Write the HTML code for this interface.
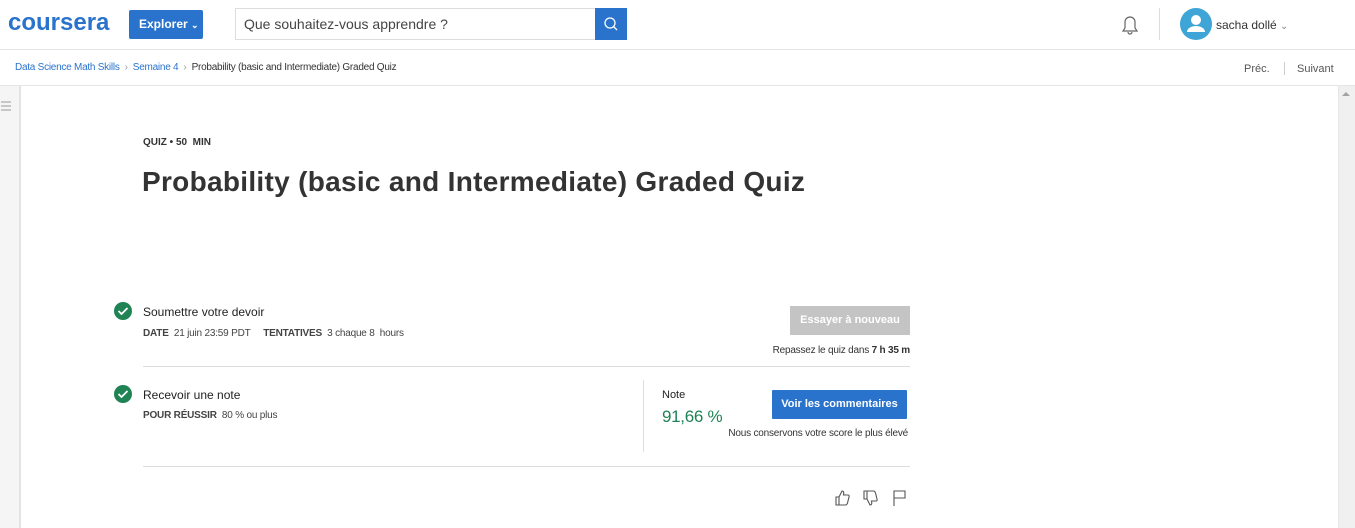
<!DOCTYPE html>
<html><head><meta charset="utf-8"><style>
*{margin:0;padding:0;box-sizing:border-box}
body{width:1355px;height:528px;overflow:hidden;background:#fff;font-family:"Liberation Sans",sans-serif;color:#1f1f1f;position:relative}
.a{position:absolute;white-space:nowrap}
</style></head><body>
<div class="a" style="left:8px;top:9px;font-size:24px;font-weight:bold;color:#2a73cc;letter-spacing:0px">coursera</div>
<div class="a" style="left:129px;top:10px;width:74px;height:29px;background:#2a73cc;border-radius:2px;color:#fff;font-size:12px;font-weight:bold;line-height:29px;padding-left:10px">Explorer <span style="font-size:9px">&#8964;</span></div>
<div class="a" style="left:235px;top:8px;width:361px;height:32px;border:1px solid #ddd;font-size:14px;color:#444;line-height:30px;padding-left:8px">Que souhaitez-vous apprendre ?</div>
<div class="a" style="left:595px;top:8px;width:32px;height:32px;background:#2a73cc">
<svg width="32" height="32"><circle cx="15" cy="15" r="5" fill="none" stroke="#fff" stroke-width="1.3"/><line x1="18.5" y1="18.5" x2="22" y2="22" stroke="#fff" stroke-width="1.3"/></svg></div>
<svg class="a" style="left:1118px;top:12px" width="24" height="26"><path d="M5 19h14l-2-3v-6a5 5 0 0 0-10 0v6z" fill="none" stroke="#666" stroke-width="1.2"/><path d="M10 20a2 2 0 0 0 4 0" fill="none" stroke="#666" stroke-width="1.2"/></svg>
<div class="a" style="left:1159px;top:8px;width:1px;height:32px;background:#ddd"></div>
<svg class="a" style="left:1180px;top:8px" width="32" height="32"><circle cx="16" cy="16" r="16" fill="#3fa5d6"/><circle cx="16" cy="12" r="5" fill="#fff"/><path d="M7 24a9 6 0 0 1 18 0z" fill="#fff"/></svg>
<div class="a" style="left:1216px;top:18px;font-size:12px;color:#333">sacha dollé <span style="color:#888;font-size:10px">&#8964;</span></div>
<div class="a" style="left:0;top:49px;width:1355px;height:1px;background:#e5e5e5"></div>
<div class="a" style="left:15px;top:62px;font-size:10px;color:#2a73cc;letter-spacing:-0.25px">Data Science Math Skills <span style="color:#999">&nbsp;›&nbsp;</span> Semaine 4 <span style="color:#999">&nbsp;›&nbsp;</span> <span style="color:#333">Probability (basic and Intermediate) Graded Quiz</span></div>
<div class="a" style="left:1244px;top:63px;font-size:11px;color:#555">Préc.</div>
<div class="a" style="left:1284px;top:62px;width:1px;height:13px;background:#ccc"></div>
<div class="a" style="left:1297px;top:63px;font-size:11px;color:#555">Suivant</div>
<div class="a" style="left:0;top:85px;width:1355px;height:1px;background:#e5e5e5"></div>
<div class="a" style="left:0;top:86px;width:21px;height:442px;background:#f5f5f5;border-right:2px solid #e3e3e3"></div>
<svg class="a" style="left:0;top:99px" width="12" height="14"><path d="M1 3h10M1 7h10M1 11h10" stroke="#999" stroke-width="1"/></svg>
<div class="a" style="left:1338px;top:86px;width:17px;height:442px;background:#f0f0f0;border-left:1px solid #e6e6e6"></div>
<svg class="a" style="left:1341px;top:90px" width="10" height="8"><path d="M1 6L5 2L9 6z" fill="#a3a3a3"/></svg>
<div class="a" style="left:143px;top:137px;font-size:10px;font-weight:bold;color:#333">QUIZ • 50 &nbsp;MIN</div>
<div class="a" style="left:142px;top:166px;font-size:28px;font-weight:bold;color:#333;letter-spacing:0.3px">Probability (basic and Intermediate) Graded Quiz</div>
<svg class="a" style="left:113px;top:301px" width="20" height="20"><circle cx="10" cy="10" r="9" fill="#1f8354"/><path d="M5.5 10l3 3 6-6" fill="none" stroke="#fff" stroke-width="1.8"/></svg>
<div class="a" style="left:143px;top:305px;font-size:12px;color:#222">Soumettre votre devoir</div>
<div class="a" style="left:143px;top:328px;font-size:10px;color:#444;letter-spacing:-0.2px"><b>DATE</b>&nbsp; 21 juin 23:59 PDT &nbsp; &nbsp; <b>TENTATIVES</b>&nbsp; 3 chaque 8 &nbsp;hours</div>
<div class="a" style="left:790px;top:306px;width:120px;height:29px;background:#c4c4c4;color:#fff;font-size:11px;font-weight:bold;text-align:center;line-height:29px">Essayer à nouveau</div>
<div class="a" style="right:445px;top:345px;font-size:10px;color:#333;letter-spacing:-0.2px">Repassez le quiz dans <b>7 h 35 m</b></div>
<div class="a" style="left:143px;top:366px;width:767px;height:1px;background:#ddd"></div>
<svg class="a" style="left:113px;top:384px" width="20" height="20"><circle cx="10" cy="10" r="9" fill="#1f8354"/><path d="M5.5 10l3 3 6-6" fill="none" stroke="#fff" stroke-width="1.8"/></svg>
<div class="a" style="left:143px;top:388px;font-size:12px;color:#222">Recevoir une note</div>
<div class="a" style="left:143px;top:410px;font-size:10px;color:#444;letter-spacing:-0.2px"><b>POUR RÉUSSIR</b>&nbsp; 80 % ou plus</div>
<div class="a" style="left:643px;top:380px;width:1px;height:72px;background:#ddd"></div>
<div class="a" style="left:662px;top:389px;font-size:11px;color:#222">Note</div>
<div class="a" style="left:662px;top:407px;font-size:17px;color:#1f8354;letter-spacing:-0.3px">91,66 %</div>
<div class="a" style="left:772px;top:390px;width:135px;height:29px;background:#2a73cc;color:#fff;font-size:11px;font-weight:bold;text-align:center;line-height:29px;border-radius:1px">Voir les commentaires</div>
<div class="a" style="right:447px;top:428px;font-size:10px;color:#333;letter-spacing:-0.2px">Nous conservons votre score le plus élevé</div>
<div class="a" style="left:143px;top:466px;width:767px;height:1px;background:#ddd"></div>
<svg class="a" style="left:834px;top:488px" width="76" height="20" fill="none" stroke="#555" stroke-width="1.1">
<path d="M2 9h3v8H2zM5 9l3-6c2 0 2 2 1.5 4H14c1 0 1.5 1 1 2l-1.5 6c-.3 1-1 2-2 2H5"/>
<path d="M30 11h3V3h-3zM33 11l3 6c2 0 2-2 1.5-4H42c1 0 1.5-1 1-2l-1.5-6c-.3-1-1-2-2-2H33"/>
<path d="M60 18V3h11v7H60"/>
</svg>
</body></html>
